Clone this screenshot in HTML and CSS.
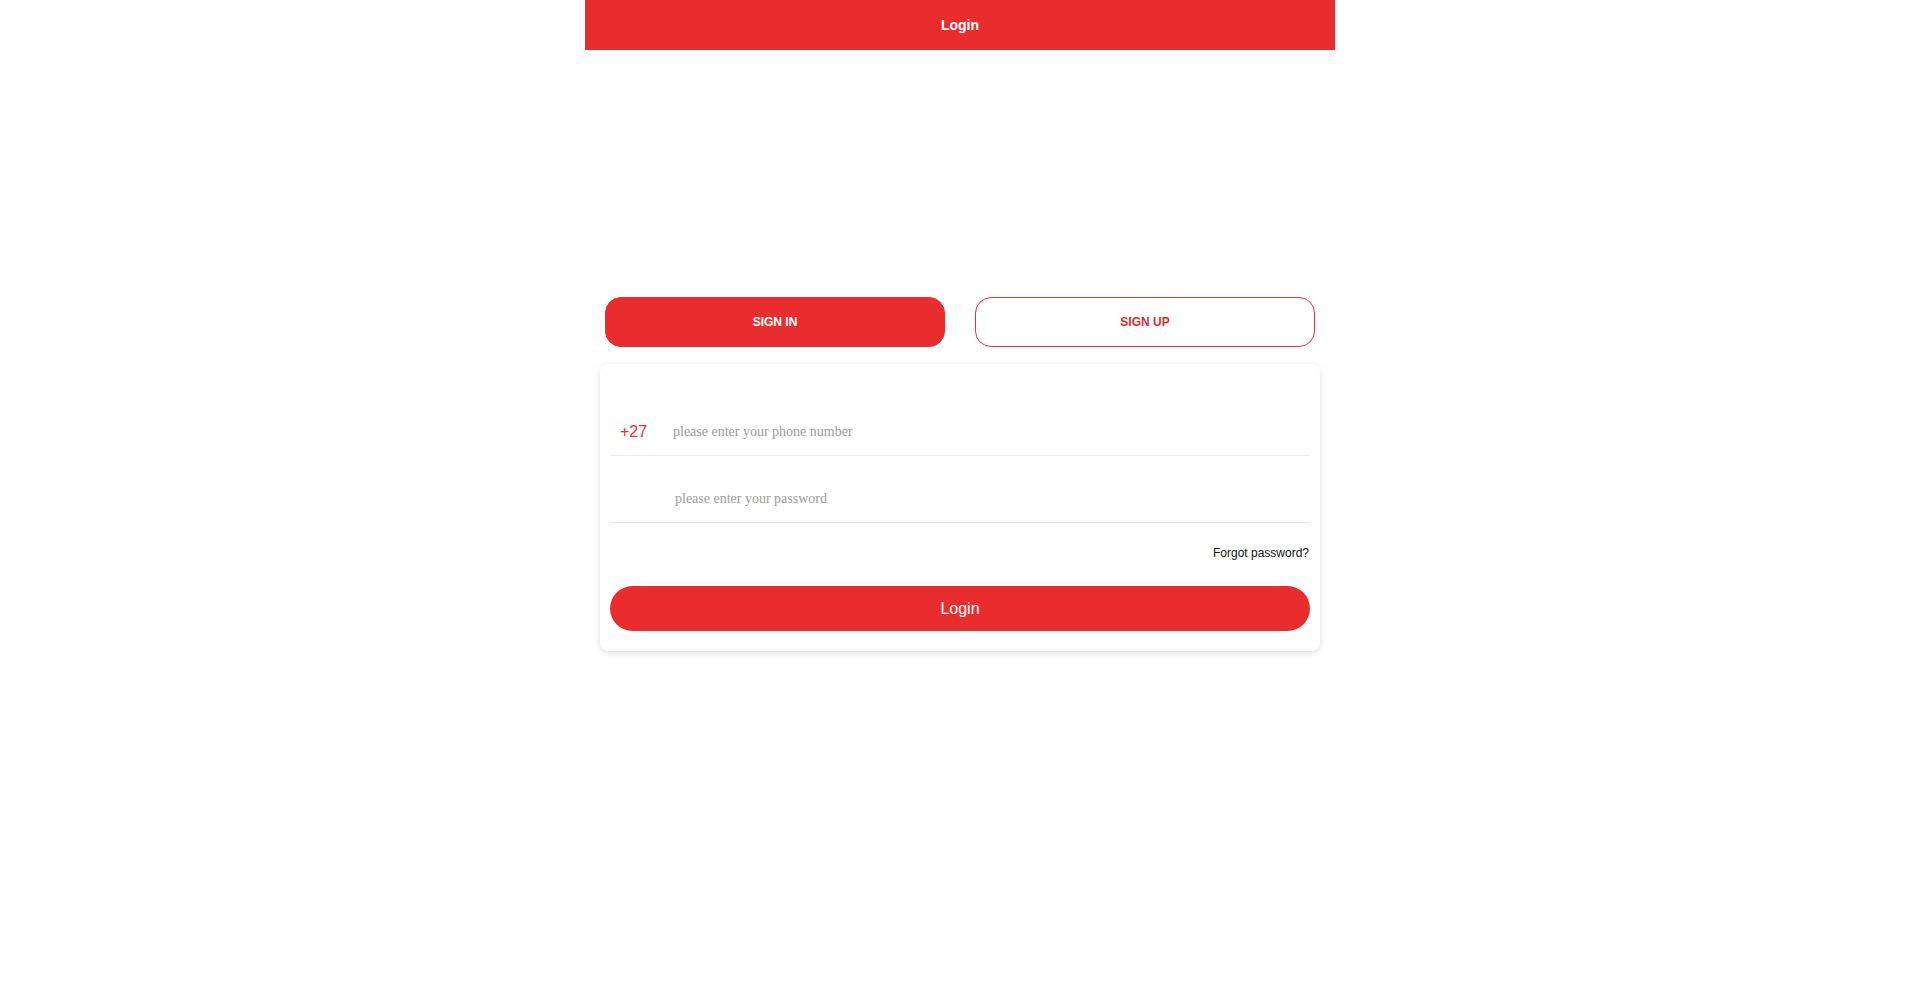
FILE: index.html
```html
<!DOCTYPE html>
<html lang="en">
<head>
<meta charset="utf-8">
<title>Login</title>
<link rel="stylesheet" href="styles.css">
</head>
<body>
<div class="app">
  <header class="topbar">Login</header>
  <main class="content">
    <div class="tabs">
      <button class="tab tab-active">SIGN IN</button>
      <button class="tab tab-outline">SIGN UP</button>
    </div>
    <form class="card">
      <div class="field">
        <span class="prefix">+27</span>
        <input class="input input-phone" type="text" placeholder="please enter your phone number">
      </div>
      <div class="field field-second">
        <input class="input input-pass" type="password" placeholder="please enter your password">
      </div>
      <div class="forgot">Forgot password?</div>
      <button type="button" class="submit">Login</button>
    </form>
  </main>
</div>
</body>
</html>
```
FILE: styles.css
```css
html, body {
  margin: 0;
  padding: 0;
  background: #fff;
}
body {
  font-family: "Liberation Sans", Arial, sans-serif;
}
.app {
  width: 750px;
  margin: 0 auto;
  min-height: 993px;
  background: #fff;
}
.topbar {
  height: 50px;
  background: #e92c2e;
  color: #fff;
  font-weight: bold;
  font-size: 14px;
  display: flex;
  align-items: center;
  justify-content: center;
}
.content {
  padding-top: 247px;
}
.tabs {
  display: grid;
  grid-template-columns: 1fr 1fr;
  gap: 30px;
  padding: 0 20px;
}
.tab {
  height: 50px;
  border-radius: 16px;
  font-family: "Liberation Sans", Arial, sans-serif;
  font-size: 12px;
  font-weight: bold;
  box-sizing: border-box;
  cursor: pointer;
}
.tab-active {
  background: #e92c2e;
  color: #fff;
  border: 1px solid #e92c2e;
}
.tab-outline {
  background: #fff;
  color: #e0282c;
  border: 1px solid #e0383c;
}
.card {
  margin: 17px 15px 0;
  padding: 20px 10px 20px;
  background: #fff;
  border-radius: 8px;
  box-shadow: 0 2px 6px rgba(0, 0, 0, 0.13);
  display: flex;
  flex-direction: column;
}
.field {
  margin-top: 25px;
  height: 46px;
  border-bottom: 1px solid #ececec;
  display: flex;
  align-items: center;
}
.field-second {
  margin-top: 20px;
}
.prefix {
  color: #e92c2e;
  font-size: 16px;
  width: 63px;
  padding-left: 10px;
  box-sizing: border-box;
  flex: none;
}
.input {
  flex: 1;
  border: none;
  outline: none;
  background: transparent;
  font-family: "Liberation Serif", "Times New Roman", serif;
  font-size: 14px;
  color: #333;
  padding: 0;
}
.input-pass {
  margin-left: 65px;
}
.input::placeholder {
  color: #9b9b9b;
}
.forgot {
  margin-top: 23px;
  text-align: right;
  font-size: 12px;
  line-height: 14px;
  color: #111;
  padding-right: 1px;
}
.submit {
  margin-top: 26px;
  height: 45px;
  border: none;
  border-radius: 23px;
  background: #e92c2e;
  color: #fff;
  font-family: "Liberation Sans", Arial, sans-serif;
  font-size: 16px;
  cursor: pointer;
}
```
